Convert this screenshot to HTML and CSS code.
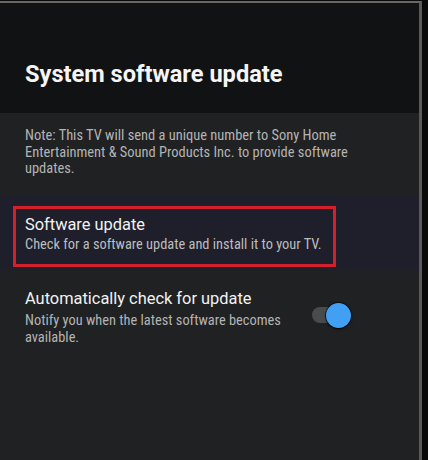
FILE: index.html
```html
<!DOCTYPE html>
<html lang="en">
<head>
<meta charset="utf-8">
<title>System software update</title>
<link rel="stylesheet" href="styles.css">
</head>
<body>
<div class="panel">
  <header class="header">
    <h1 class="title">System software update</h1>
  </header>
  <p class="note cond">Note: This TV will send a unique number to Sony Home<br>Entertainment &amp; Sound Products Inc. to provide software<br>updates.</p>
  <div class="item active">
    <div class="focus">
      <div class="item-title">Software update</div>
      <div class="item-sub cond">Check for a software update and install it to your TV.</div>
    </div>
  </div>
  <div class="item auto">
    <div class="item-text">
      <div class="item-title">Automatically check for update</div>
      <div class="item-sub sub2 cond">Notify you when the latest software becomes<br>available.</div>
    </div>
    <div class="toggle" role="switch" aria-checked="true">
      <span class="track"></span>
      <span class="thumb"></span>
    </div>
  </div>
</div>
</body>
</html>
```

FILE: styles.css
```css
html, body {
  margin: 0;
  padding: 0;
}
body {
  width: 428px;
  height: 460px;
  overflow: hidden;
  background: #0a0a0a;
  font-family: Roboto, "Noto Sans", sans-serif;
}
.panel {
  margin-top: 1px;
  width: 419px;
  height: 457px;
  border-top: 2px solid #686868;
  border-right: 3px solid #5a5a5a;
  background: #202123;
}
.header {
  background: #111213;
  padding: 57px 25px 25px;
}
.title {
  margin: 0;
  font-size: 23.6px;
  line-height: 28px;
  font-weight: 700;
  color: #f5f5f5;
}
.cond {
  font-family: "Roboto Condensed", "Liberation Sans Narrow", "Arial Narrow", Roboto, sans-serif;
  font-stretch: condensed;
}
.note {
  margin: 0;
  padding: 15px 25px 17px;
  font-size: 14.45px;
  line-height: 16.7px;
  color: #b4b4b4;
}
.item.active {
  background: #1e1f2b;
  padding: 11px 0 2px;
}
.focus {
  box-sizing: border-box;
  margin-left: 13px;
  width: 323px;
  height: 61px;
  border: 3px solid #d2202d;
  padding: 6px 0 0 9px;
}
.item-title {
  font-size: 16.4px;
  line-height: 20px;
  color: #f2f2f2;
}
.item-sub {
  margin-top: 2px;
  font-size: 14.4px;
  line-height: 16.5px;
  color: #bdbdbd;
}
.item.auto {
  display: flex;
  align-items: flex-start;
  padding: 20px 0 0 25px;
}
.item-text {
  width: 287px;
}
.sub2 {
  margin-top: 4px;
  color: #b4b4b4;
}
.toggle {
  position: relative;
  width: 39px;
  height: 25px;
  margin-top: 13.5px;
}
.track {
  position: absolute;
  left: 0;
  top: 4.5px;
  width: 33px;
  height: 16px;
  border-radius: 8px;
  background: #4a4b4e;
}
.thumb {
  position: absolute;
  right: 0;
  top: 0;
  width: 25px;
  height: 25px;
  border-radius: 50%;
  background: #42a0f4;
  box-shadow: 0 0 0 1px rgba(0, 0, 0, 0.55), 0 1px 3px rgba(0, 0, 0, 0.6);
}
```
